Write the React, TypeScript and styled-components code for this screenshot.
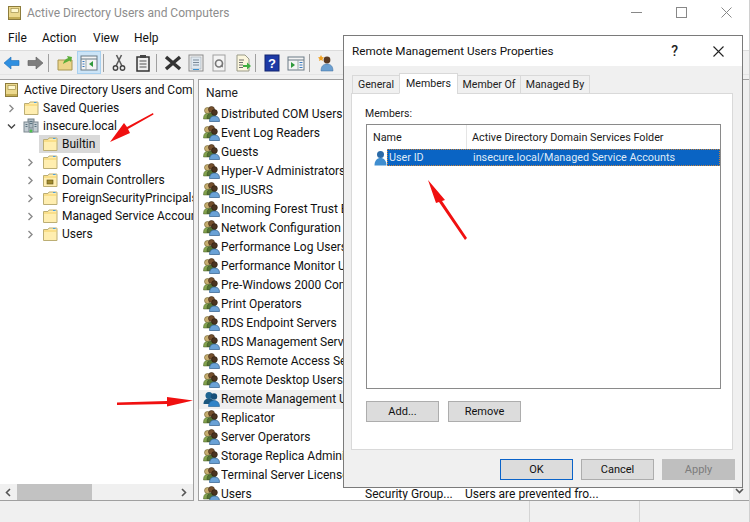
import React from "react";
import styled, { createGlobalStyle } from "styled-components";

const Global = createGlobalStyle`
  html, body { margin: 0; padding: 0; background: #fff; overflow: hidden; }
  * { box-sizing: border-box; }
  #root { width: 750px; height: 522px; }
`;
const Page = styled.div`
  position: relative; width: 750px; height: 522px; overflow: hidden; display: flex; flex-direction: column;
  font-family: Roboto, "Noto Sans", sans-serif; font-size: 12px; color: #1a1a1a; background: #fff;
  border-right: 1px solid #d0d0d0;
`;
const TitleBar = styled.div`
  height: 25px; display: flex; align-items: center; padding-left: 7px; gap: 4px; color: #8d8d8d; flex: none;
`;
const WinButtons = styled.div`margin-left: auto; display: flex; gap: 34px; padding-right: 17px; align-items: center;`;
const MenuBar = styled.div`height: 25px; display: flex; align-items: center; padding-left: 8px; flex: none; color: #111;`;
const MenuItem = styled.span<{ $w: number }>`width: ${p => p.$w}px; flex: none;`;
const Toolbar = styled.div`
  height: 25px; flex: none; display: flex; align-items: center; background: #f0f0f0; border-top: 1px solid #dcdcdc; border-bottom: 1px solid #e4e4e4;
`;
const ToolSlot = styled.div<{ $active?: boolean; $w: number }>`
  width: ${p => p.$w}px; height: 23px; display: flex; align-items: center; justify-content: center; flex: none;
  background: ${p => p.$active ? "#cce4f7" : "transparent"};
  border: 1px solid ${p => p.$active ? "#a8d0ef" : "transparent"};
`;
const Sep = styled.div`width: 1px; height: 18px; background: #a0a0a0; margin: 0 3px 0 2px; flex: none;`;
const Content = styled.div`flex: 1; display: flex; gap: 4px; min-height: 0; background: #f0f0f0; padding-top: 4px;`;
const LeftPane = styled.div`
  width: 194px; flex: none; background: #fff; border: 1px solid #a0a0a0; border-width: 1px 1px 1px 0; display: flex; flex-direction: column; overflow: hidden;
`;
const Tree = styled.div`flex: 1; padding-top: 1px; overflow: hidden;`;
const TreeRow = styled.div<{ $indent: number }>`
  height: 18px; display: flex; align-items: center; white-space: nowrap; padding-left: ${p => p.$indent}px; color: #111;
`;
const Chevron = styled.svg`width: 9px; height: 9px; flex: none; margin-right: 7px;`;
const RowIcon = styled.span`width: 16px; height: 16px; flex: none; display: flex; margin-right: 4px;`;
const SelLabel = styled.span<{ $selected?: boolean }>`
  display: flex; align-items: center; white-space: nowrap; height: 18px;
  padding: 0 ${p => p.$selected ? "5px" : "0"} 0 ${p => p.$selected ? "3px" : "0"};
  background: ${p => p.$selected ? "#d9d9d9" : "transparent"};
`;
const HScroll = styled.div`height: 16px; flex: none; background: #f0f0f0; display: flex; align-items: center; justify-content: space-between; padding: 0 5px 0 4px;`;
const HThumbTrack = styled.div`flex: 1; display: flex; height: 100%; padding-left: 5px;`;
const HThumb = styled.div`width: 75px; height: 100%; background: #c2c2c2;`;
const RightPane = styled.div`flex: 1; min-width: 0; background: #fff; border: 1px solid #a0a0a0; border-width: 1px 0 1px 1px; overflow: hidden; display: flex;`;
const ListColumn = styled.div`flex: 1; min-width: 0; overflow: hidden; display: flex; flex-direction: column;`;
const VScroll = styled.div`width: 16px; flex: none; background: #f0f0f0; display: flex; flex-direction: column; justify-content: flex-end; align-items: center; padding: 0 4px 5px 0;`;
const ListHeader = styled.div`height: 24.5px; display: flex; align-items: center; padding: 2px 0 0 7px; flex: none; color: #222;`;
const ListRow = styled.div<{ $hot?: boolean }>`
  height: 19px; display: flex; align-items: center; padding-left: 4px; white-space: nowrap; flex: none; color: #111;
  background: ${p => p.$hot ? "#efefef" : "transparent"};
`;
const RowName = styled.span`width: 144px; overflow: hidden; flex: none;`;
const RowType = styled.span`width: 100px; flex: none;`;
const StatusBar = styled.div`height: 21px; flex: none; background: #f0f0f0; display: flex; padding-left: 529px;`;
const StatusCell = styled.div`width: 134px; border-left: 1px solid #d4d4d4; height: 100%;`;

const Dialog = styled.div`
  position: absolute; left: 343px; top: 35px; width: 400px; height: 453px; background: #f0f0f0; border: 1px solid #7a7a7a;
  display: flex; flex-direction: column; font-size: 10.8px;
`;
const DlgTitle = styled.div`height: 30px; background: #fff; display: flex; align-items: center; padding-left: 8px; color: #111; flex: none; font-size: 11.7px;`;
const DlgIcons = styled.div`margin-left: auto; display: flex; align-items: center; gap: 35px; padding-right: 18px;`;
const DlgHelp = styled.span`font-size: 14px; font-weight: 500; color: #222;`;
const Tabs = styled.div`height: 24px; margin-top: 3px; display: flex; align-items: flex-end; padding-left: 9px; flex: none; position: relative; z-index: 1;`;
const Tab = styled.div<{ $active?: boolean; $w: number }>`
  width: ${p => p.$w}px; height: ${p => p.$active ? 21 : 19}px; display: flex; align-items: center; justify-content: center; border: 1px solid #d9d9d9;
  background: ${p => p.$active ? "#fff" : "#f0f0f0"}; margin: 0 0 -1px -1px; color: #222; font-size: 10.6px;
  border-bottom-color: ${p => p.$active ? "#fff" : "#d9d9d9"};
`;
const TabBody = styled.div`
  margin: 0 9px 0 7px; height: 357px; background: #fff; border: 1px solid #d9d9d9; padding: 10px 11px 0 13px; flex: none; display: flex; flex-direction: column;
`;
const MembersLabel = styled.div`height: 18px; color: #222; flex: none; display: flex; align-items: center; font-size: 10.5px;`;
const ListBox = styled.div`height: 265px; border: 1px solid #8a8a8a; flex: none; margin: 2px 0 0 1px; display: flex; flex-direction: column;`;
const BoxHead = styled.div`height: 24px; display: flex; align-items: center; flex: none;`;
const BoxName = styled.div`width: 100px; height: 100%; padding-left: 6px; display: flex; align-items: center; border-right: 1px solid #e5e5e5; flex: none;`;
const BoxFolder = styled.div`padding-left: 5px;`;
const BoxRow = styled.div`height: 17px; display: flex; align-items: center; padding-left: 7px; flex: none;`;
const Selected = styled.div`
  flex: 1; height: 17px; background: #0a64c4; color: #dfeaf7; display: flex; align-items: center; outline: 1px dotted #c8843c; outline-offset: -1px; padding-left: 2px;
`;
const SelName = styled.span`width: 84px; flex: none;`;
const BoxButtons = styled.div`display: flex; gap: 9px; margin: 12px 0 0 1px; flex: none;`;
const Button = styled.div<{ $kind?: "default" | "disabled" }>`
  width: 73px; height: 21px; background: ${p => p.$kind === "disabled" ? "#bfbfbf" : "#dcdcdc"};
  border: 1px solid ${p => p.$kind === "default" ? "#0a63c9" : p.$kind === "disabled" ? "#bfbfbf" : "#adadad"};
  ${p => p.$kind === "default" ? "outline: 1px solid #0a63c9; outline-offset: -1px;" : ""}
  color: ${p => p.$kind === "disabled" ? "#7c7c7c" : "#111"}; display: flex; align-items: center; justify-content: center; font-size: 11px;
`;
const DlgFooter = styled.div`display: flex; justify-content: flex-end; gap: 8px; padding: 9px 7px 0 0; flex: none;`;
const Overlay = styled.svg`position: absolute; left: 0; top: 0; width: 750px; height: 522px; pointer-events: none;`;

const Book = () => (
  <svg width="16" height="16" viewBox="0 0 16 16"><rect x="1.500" y="1.500" width="12" height="13" fill="#ecd98e" stroke="#8d7c3c"/><rect x="4" y="3.500" width="7.500" height="4" fill="#fff8cf" stroke="#a0904c" strokeWidth=".7"/><rect x="2" y="12" width="11" height="2" fill="#c4ad55"/></svg>
);
const Folder = ({ ou }: { ou?: boolean }) => (
  <svg width="16" height="16" viewBox="0 0 16 16">
    <path d="M1.500 3.500h4.500l1-1.500h7.500a.5.5 0 0 1 .5.5V14.500H1.500z" fill="#ffeeb0" stroke="#bcae74"/>
    <path d="M2 5h12.500" stroke="#f4cf63"/>
    {ou && <rect x="5" y="8" width="6" height="4" fill="#a08a30" stroke="#5c4f1a" strokeWidth=".6"/>}
    <path d="M11 2.500h2.500" stroke="#4aa0e0"/>
  </svg>
);
const Domain = () => (
  <svg width="16" height="16" viewBox="0 0 16 16">
    <rect x="5" y="1" width="6" height="9" fill="#aebcc4" stroke="#74828a"/>
    <rect x="1" y="4" width="5" height="10" fill="#c2ccd2" stroke="#7c8890"/>
    <rect x="10" y="4" width="5" height="10" fill="#c2ccd2" stroke="#7c8890"/>
    <path d="M2.500 6.500h2M2.500 8.500h2M11.500 6.500h2M11.500 8.500h2M6.500 3.500h3M6.500 5.500h3" stroke="#5c7480"/>
    <rect x="6" y="10" width="4" height="5" fill="#9aa8b0"/>
    <circle cx="8" cy="13" r="1.500" fill="#4cc04c"/>
  </svg>
);
const GroupIcon = ({ hot }: { hot?: boolean }) => hot ? (
  <svg width="18" height="17" viewBox="0 0 18 17">
    <circle cx="6" cy="4.500" r="3.500" fill="#1f6490"/><path d="M.5 13c0-4 2.500-5.500 5.500-5.500s5.500 1.500 5.500 5.500z" fill="#1b577e"/>
    <circle cx="11" cy="5.500" r="3.200" fill="#174f78"/><path d="M5.500 15.500c0-4 2.500-6 5.500-6s5.500 2 5.500 6z" fill="#3184c8" stroke="#1d5c92" strokeWidth=".6"/>
  </svg>
) : (
  <svg width="18" height="17" viewBox="0 0 18 17">
    <circle cx="4.500" cy="4.500" r="3" fill="#c6ad70" stroke="#6c5f2c" strokeWidth=".6"/><path d="M.5 13c0-4 1.500-5.500 4-5.500s4 1.500 4 5.500z" fill="#83a24e" stroke="#4a5e24" strokeWidth=".5"/>
    <circle cx="8.500" cy="3.500" r="3" fill="#75502e" stroke="#3c2815" strokeWidth=".6"/><path d="M4 12.500c0-4 2-5.500 4.500-5.500s4.500 1.500 4.500 5.500z" fill="#547436" stroke="#33481e" strokeWidth=".5"/>
    <circle cx="11.500" cy="6.500" r="2.900" fill="#4a3320" stroke="#241709" strokeWidth=".5"/><path d="M6.500 15.500c0-4 2-5.500 5-5.500s5 1.500 5 5.500z" fill="#6ba2d6" stroke="#2f5c8a" strokeWidth=".7"/>
  </svg>
);
const ChevR = () => <Chevron viewBox="0 0 9 9"><path d="M2.500 1l3.500 3.500L2.500 8" fill="none" stroke="#8a8a8a" strokeWidth="1.400"/></Chevron>;
const ChevD = () => <Chevron viewBox="0 0 9 9"><path d="M1 2.500l3.500 3.500L8 2.500" fill="none" stroke="#444" strokeWidth="1.400"/></Chevron>;

const names = ["Distributed COM Users","Event Log Readers","Guests","Hyper-V Administrators","IIS_IUSRS","Incoming Forest Trust Builders","Network Configuration Operators","Performance Log Users","Performance Monitor Users","Pre-Windows 2000 Compatible","Print Operators","RDS Endpoint Servers","RDS Management Servers","RDS Remote Access Servers","Remote Desktop Users","Remote Management Users","Replicator","Server Operators","Storage Replica Administrators","Terminal Server License Servers"];

const children: { name: string; ou?: boolean; sel?: boolean }[] = [
  { name: "Builtin", sel: true },
  { name: "Computers" },
  { name: "Domain Controllers", ou: true },
  { name: "ForeignSecurityPrincipals" },
  { name: "Managed Service Accounts" },
  { name: "Users" },
];

const IconSvg = ({ children }: { children: React.ReactNode }) => <svg width="18" height="18" viewBox="0 0 18 18">{children}</svg>;

export default function App() {
  return (
    <Page>
      <Global />
      <TitleBar>
        <Book />
        Active Directory Users and Computers
        <WinButtons>
          <svg width="11" height="11" viewBox="0 0 11 11"><path d="M0 5.500h11" stroke="#888"/></svg>
          <svg width="11" height="11" viewBox="0 0 11 11"><rect x=".5" y=".5" width="10" height="10" fill="none" stroke="#888"/></svg>
          <svg width="11" height="11" viewBox="0 0 11 11"><path d="M.5.500l10 10M10.500.500l-10 10" stroke="#888"/></svg>
        </WinButtons>
      </TitleBar>
      <MenuBar><MenuItem $w={34}>File</MenuItem><MenuItem $w={51}>Action</MenuItem><MenuItem $w={41}>View</MenuItem><MenuItem $w={40}>Help</MenuItem></MenuBar>
      <Toolbar>
        <ToolSlot $w={23}><IconSvg><path d="M1 9l7-6v3.500h8v5H8V15z" fill="#2f8fe0" stroke="#1d6fb8" strokeWidth=".6"/></IconSvg></ToolSlot>
        <ToolSlot $w={23}><IconSvg><path d="M17 9l-7-6v3.500H2v5h8V15z" fill="#7d7d7d" stroke="#5c5c5c" strokeWidth=".6"/></IconSvg></ToolSlot>
        <Sep />
        <ToolSlot $w={25}><IconSvg><path d="M2 6h14v10H2z" fill="#ecd58a" stroke="#a89650"/><path d="M7 10c1-4 3-5 5-6l-1-2 5 1-1 5-1.500-1.500C12 7.500 10 8 7 10z" fill="#5cae3a"/></IconSvg></ToolSlot>
        <ToolSlot $active $w={24}><IconSvg><rect x="1" y="2" width="16" height="14" fill="#f4f4f4" stroke="#6a7a86"/><path d="M1 5h16" stroke="#6a7a86"/><path d="M6 5v11" stroke="#9aa"/><path d="M2.500 7.500h2M2.500 10h2M2.500 12.500h2" stroke="#3a7ac0"/><path d="M13 7v6l-4-3z" fill="#2f9a3c"/></IconSvg></ToolSlot>
        <Sep />
        <ToolSlot $w={24}><IconSvg><path d="M11.500 1L6 12M6.500 1L12 12" stroke="#5c5c5c" strokeWidth="1.600"/><circle cx="5.500" cy="14" r="2.200" fill="none" stroke="#444" strokeWidth="1.400"/><circle cx="12.500" cy="14" r="2.200" fill="none" stroke="#444" strokeWidth="1.400"/></IconSvg></ToolSlot>
        <ToolSlot $w={23}><IconSvg><rect x="3" y="3" width="12" height="14" fill="#eee" stroke="#333" strokeWidth="1.500"/><rect x="6" y="1" width="6" height="3" fill="#444"/><path d="M5.500 7h7M5.500 10h7M5.500 13h7" stroke="#555"/></IconSvg></ToolSlot>
        <Sep />
        <ToolSlot $w={26}><IconSvg><path d="M2 3l14 12M16 3L2 15" stroke="#333" strokeWidth="3.400"/></IconSvg></ToolSlot>
        <ToolSlot $w={20}><IconSvg><rect x="2" y="1" width="14" height="16" fill="#f2f2f2" stroke="#8a8a8a"/><rect x="4" y="3" width="10" height="12" fill="#dfe8f0" stroke="#a0a8b0" strokeWidth=".6"/><path d="M6 6h6M6 8.500h6M6 11h6" stroke="#7a8a98"/><path d="M6 15.500h6" stroke="#3a90d0"/></IconSvg></ToolSlot>
        <ToolSlot $w={26}><IconSvg><rect x="3" y="1" width="12" height="16" fill="#f4f4f4" stroke="#a0a0a0"/><circle cx="9" cy="9.500" r="3.500" fill="none" stroke="#777" strokeWidth="1.700"/><path d="M10 12l3 1.500-.5-3.500z" fill="#777"/></IconSvg></ToolSlot>
        <ToolSlot $w={21}><IconSvg><path d="M3 1h8l4 4v12H3z" fill="#fbf6dd" stroke="#9a9a88"/><path d="M5 6h5M5 8.500h4M5 11h4M5 13.500h4" stroke="#6a6a6a"/><path d="M9 11h4V8.500l4 3.500-4 3.500V13H9z" fill="#3fae3f"/></IconSvg></ToolSlot>
        <Sep />
        <ToolSlot $w={26}><IconSvg><rect x="2" y="1" width="14" height="16" fill="#1d3aa6" stroke="#12256e"/><text x="9" y="14" textAnchor="middle" fontSize="13" fontWeight="700" fill="#fff" fontFamily="Liberation Sans">?</text></IconSvg></ToolSlot>
        <ToolSlot $w={22}><IconSvg><rect x="1" y="3" width="16" height="13" fill="#f4f4f4" stroke="#6a7a86"/><path d="M1 6h16" stroke="#6a7a86"/><path d="M11 6v10" stroke="#9aa"/><path d="M4 8v6l4-3z" fill="#2f9a3c"/><path d="M12.500 8.500h3M12.500 11h3M12.500 13.500h3" stroke="#3a7ac0"/></IconSvg></ToolSlot>
        <Sep />
        <ToolSlot $w={26}><IconSvg><circle cx="10" cy="6" r="3.400" fill="#5a3a22"/><path d="M4 17c0-5 2.500-7 6-7s6 2 6 7z" fill="#6b9fd0" stroke="#3e6c9c" strokeWidth=".5"/><path d="M4 1l1 2 2 .5-1.500 1.500.5 2-2-1-2 1 .5-2L1 3.500 3 3z" fill="#f0a020"/></IconSvg></ToolSlot>
      </Toolbar>
      <Content>
        <LeftPane>
          <Tree>
            <TreeRow $indent={4}><RowIcon><Book /></RowIcon>Active Directory Users and Computers</TreeRow>
            <TreeRow $indent={7}><ChevR /><RowIcon><Folder /></RowIcon>Saved Queries</TreeRow>
            <TreeRow $indent={7}><ChevD /><RowIcon><Domain /></RowIcon>insecure.local</TreeRow>
            {children.map(c => (
              <TreeRow $indent={c.sel ? 39 : 26} key={c.name}>
                {!c.sel && <ChevR />}
                <SelLabel $selected={c.sel}>
                  <RowIcon><Folder ou={c.ou} /></RowIcon>
                  {c.name}
                </SelLabel>
              </TreeRow>
            ))}
          </Tree>
          <HScroll>
            <svg width="8" height="9" viewBox="0 0 8 9"><path d="M6 1L2.500 4.500 6 8" fill="none" stroke="#555" strokeWidth="1.600"/></svg>
            <HThumbTrack><HThumb /></HThumbTrack>
            <svg width="8" height="9" viewBox="0 0 8 9"><path d="M2 1l3.500 3.500L2 8" fill="none" stroke="#555" strokeWidth="1.600"/></svg>
          </HScroll>
        </LeftPane>
        <RightPane>
          <ListColumn>
            <ListHeader>Name</ListHeader>
            {names.map(n => (
              <ListRow key={n} $hot={n === "Remote Management Users"}><GroupIcon hot={n === "Remote Management Users"} /><RowName>{n}</RowName></ListRow>
            ))}
            <ListRow><GroupIcon /><RowName>Users</RowName><RowType>Security Group...</RowType><span>Users are prevented fro...</span></ListRow>
          </ListColumn>
          <VScroll>
            <svg width="9" height="8" viewBox="0 0 9 8"><path d="M1 2l3.500 3.500L8 2" fill="none" stroke="#555" strokeWidth="1.600"/></svg>
          </VScroll>
        </RightPane>
      </Content>
      <StatusBar><StatusCell /><StatusCell /></StatusBar>

      <Dialog>
        <DlgTitle>
          Remote Management Users Properties
          <DlgIcons>
            <DlgHelp>?</DlgHelp>
            <svg width="11" height="11" viewBox="0 0 11 11"><path d="M.5.500l10 10M10.500.500l-10 10" stroke="#222" strokeWidth="1.100"/></svg>
          </DlgIcons>
        </DlgTitle>
        <Tabs>
          <Tab $w={48}>General</Tab><Tab $active $w={59}>Members</Tab><Tab $w={64}>Member Of</Tab><Tab $w={70}>Managed By</Tab>
        </Tabs>
        <TabBody>
          <MembersLabel>Members:</MembersLabel>
          <ListBox>
            <BoxHead><BoxName>Name</BoxName><BoxFolder>Active Directory Domain Services Folder</BoxFolder></BoxHead>
            <BoxRow>
              <svg width="13" height="16" viewBox="0 0 13 16"><circle cx="6.500" cy="4.500" r="3.500" fill="#2a6aa8"/><path d="M.5 15.500c0-5 2.500-7.500 6-7.500s6 2.500 6 7.500z" fill="#3f8ed0"/></svg>
              <Selected><SelName>User ID</SelName><span>insecure.local/Managed Service Accounts</span></Selected>
            </BoxRow>
          </ListBox>
          <BoxButtons><Button>Add...</Button><Button>Remove</Button></BoxButtons>
        </TabBody>
        <DlgFooter><Button $kind="default">OK</Button><Button>Cancel</Button><Button $kind="disabled">Apply</Button></DlgFooter>
      </Dialog>

      <Overlay viewBox="0 0 750 522">
        <path d="M153 113L127 127L124 123L110 142L130 133L128 129L153.500 114.500z" fill="#f01010" />
        <path d="M117 402.500L167 401V397L193 400.500L167 406.500V404L117 405z" fill="#f01010" />
        <path d="M428 180L445 200L442 201L467 238L465 240L439 202L436 203z" fill="#f01010" />
      </Overlay>
    </Page>
  );
}
